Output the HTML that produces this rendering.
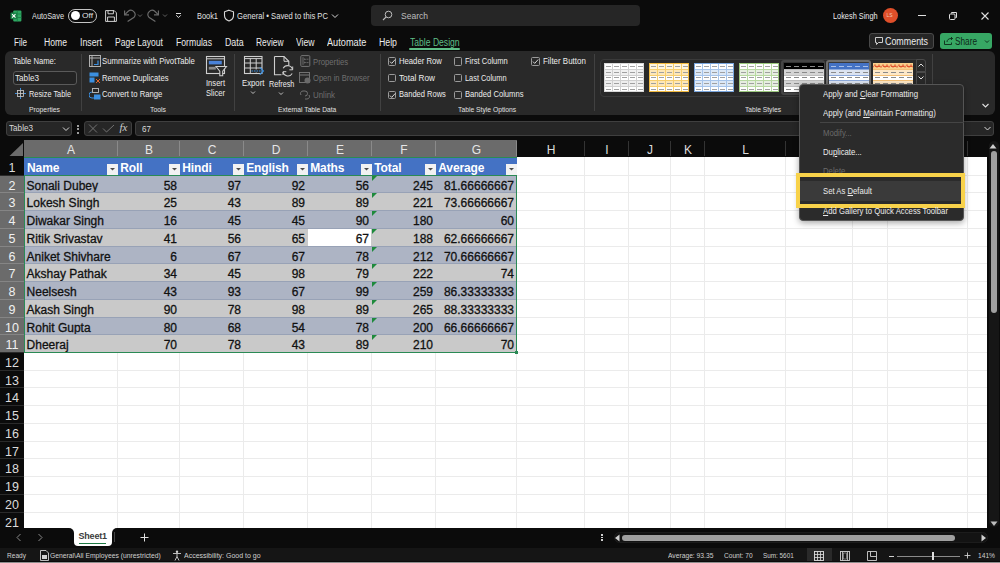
<!DOCTYPE html><html><head><meta charset="utf-8"><style>
*{margin:0;padding:0;box-sizing:border-box}
html,body{width:1000px;height:563px;overflow:hidden;background:#0b0b0b;font-family:"Liberation Sans",sans-serif;}
.a{position:absolute}
.t{position:absolute;white-space:nowrap;line-height:1}
u{text-decoration-thickness:1px;text-underline-offset:0.6px}
</style></head><body><div class="a" style="left:0;top:0;width:1000px;height:563px;background:#0b0b0b"></div>
<svg class="a" style="left:9.5px;top:9.5px" width="12" height="12" viewBox="0 0 12 12"><rect x="3.2" y="0.6" width="8.2" height="10.8" rx="1" fill="#2ea862"/><path d="M3.2 4h8.2M3.2 7.5h8.2M7.3 0.6v10.8" stroke="#1b7c45" stroke-width="0.8"/><rect x="0.5" y="2.6" width="6.6" height="6.6" rx="0.8" fill="#178045"/><path d="M2.1 4.2l3.4 3.4M5.5 4.2l-3.4 3.4" stroke="#ffffff" stroke-width="1.1"/></svg>
<div class="t" style="left:32px;top:11.50px;font-size:9px;color:#e0e0e0;font-weight:400;transform:scaleX(0.8199);transform-origin:0 0;">AutoSave</div>
<div class="a" style="left:68px;top:8.5px;width:29px;height:14px;border:1.5px solid #c4c4c4;border-radius:7px"></div>
<div class="a" style="left:70.8px;top:10.8px;width:9.4px;height:9.4px;background:#fff;border-radius:50%"></div>
<div class="t" style="left:82px;top:11.80px;font-size:8px;color:#e0e0e0;font-weight:400;transform:scaleX(1.0445);transform-origin:0 0;">Off</div>
<svg class="a" style="left:104.5px;top:9.5px" width="12" height="12" viewBox="0 0 12 12"><path d="M0.6 0.6h8.6l2.2 2.2v8.6H0.6z" fill="none" stroke="#d0d0d0" stroke-width="1"/><path d="M3 0.6v3.2h5.4V0.6M2.6 11.4V7h6.8v4.4" fill="none" stroke="#d0d0d0" stroke-width="1"/></svg>
<svg class="a" style="left:122px;top:8px" width="14" height="15" viewBox="0 0 14 15"><path d="M2.8 6.6l3.4-3.3a4.2 4.2 0 0 1 5.9 5.9L5.6 13.6" fill="none" stroke="#6c6c6c" stroke-width="1.15"/><path d="M2.6 2.4v4.4H7" fill="none" stroke="#6c6c6c" stroke-width="1.15"/></svg>
<svg class="a" style="left:136.5px;top:12.5px" width="6" height="5" viewBox="0 0 6 5"><path d="M1 1.5l2 2 2-2" fill="none" stroke="#6c6c6c" stroke-width="0.9"/></svg>
<svg class="a" style="left:147px;top:8px" width="14" height="15" viewBox="0 0 14 15" ><g transform="translate(14,0) scale(-1,1)"><path d="M2.8 6.6l3.4-3.3a4.2 4.2 0 0 1 5.9 5.9L5.6 13.6" fill="none" stroke="#6c6c6c" stroke-width="1.15"/><path d="M2.6 2.4v4.4H7" fill="none" stroke="#6c6c6c" stroke-width="1.15"/></g></svg>
<svg class="a" style="left:161.5px;top:12.5px" width="6" height="5" viewBox="0 0 6 5"><path d="M1 1.5l2 2 2-2" fill="none" stroke="#6c6c6c" stroke-width="0.9"/></svg>
<svg class="a" style="left:175px;top:12px" width="7" height="7" viewBox="0 0 7 7"><path d="M1 1.5h5" stroke="#e0e0e0" stroke-width="1"/><path d="M1.2 3.3l2.3 2.3 2.3-2.3" fill="none" stroke="#e0e0e0" stroke-width="1"/></svg>
<div class="t" style="left:197px;top:11.50px;font-size:9px;color:#e0e0e0;font-weight:400;transform:scaleX(0.8225);transform-origin:0 0;">Book1</div>
<svg class="a" style="left:223px;top:9px" width="12" height="13" viewBox="0 0 12 13"><path d="M6 1.2L10.5 2.8v3.7c0 2.8-2 4.6-4.5 5.5C3.5 11.1 1.5 9.3 1.5 6.5V2.8z" fill="none" stroke="#d8d8d8" stroke-width="1.1"/></svg>
<div class="t" style="left:237px;top:11.50px;font-size:9px;color:#e0e0e0;font-weight:400;transform:scaleX(0.8487);transform-origin:0 0;">General &#8226; Saved to this PC</div>
<svg class="a" style="left:331px;top:13px" width="8" height="6" viewBox="0 0 8 6"><path d="M1 1.5l3 3 3-3" fill="none" stroke="#d8d8d8" stroke-width="1"/></svg>
<div class="a" style="left:371px;top:5px;width:269px;height:21px;background:#262626;border-radius:4px"></div>
<svg class="a" style="left:382px;top:10px" width="11" height="11" viewBox="0 0 11 11"><circle cx="6.5" cy="4.5" r="3.3" fill="none" stroke="#bdbdbd" stroke-width="1"/><path d="M4.2 6.8L1 10" stroke="#bdbdbd" stroke-width="1.1"/></svg>
<div class="t" style="left:401px;top:10.75px;font-size:9.5px;color:#bdbdbd;font-weight:400;transform:scaleX(0.8967);transform-origin:0 0;">Search</div>
<div class="t" style="left:832.5px;top:11.50px;font-size:9px;color:#ececec;font-weight:400;transform:scaleX(0.8176);transform-origin:0 0;">Lokesh Singh</div>
<div class="a" style="left:883px;top:8px;width:15px;height:15px;background:#df4f2a;border-radius:50%"></div>
<div class="t" style="left:886.5px;top:12.5px;font-size:5px;color:#f0c8b8">LS</div>
<div class="a" style="left:918px;top:15px;width:8px;height:1px;background:#e0e0e0"></div>
<svg class="a" style="left:948px;top:11px" width="10" height="10" viewBox="0 0 10 10"><rect x="1.5" y="3" width="5.5" height="5.5" rx="1" fill="none" stroke="#e0e0e0" stroke-width="1"/><path d="M3.5 2.5V1.5h5v5h-1" fill="none" stroke="#e0e0e0" stroke-width="1"/></svg>
<svg class="a" style="left:980px;top:11px" width="10" height="10" viewBox="0 0 10 10"><path d="M1.5 1.5l7 7M8.5 1.5l-7 7" stroke="#e0e0e0" stroke-width="1.1"/></svg>
<div class="t" style="left:14px;top:37.60px;font-size:10px;color:#ececec;font-weight:400;transform:scaleX(0.8062);transform-origin:0 0;">File</div>
<div class="t" style="left:44px;top:37.60px;font-size:10px;color:#ececec;font-weight:400;transform:scaleX(0.8618);transform-origin:0 0;">Home</div>
<div class="t" style="left:80px;top:37.60px;font-size:10px;color:#ececec;font-weight:400;transform:scaleX(0.8795);transform-origin:0 0;">Insert</div>
<div class="t" style="left:115px;top:37.60px;font-size:10px;color:#ececec;font-weight:400;transform:scaleX(0.8545);transform-origin:0 0;">Page Layout</div>
<div class="t" style="left:176.1px;top:37.60px;font-size:10px;color:#ececec;font-weight:400;transform:scaleX(0.8636);transform-origin:0 0;">Formulas</div>
<div class="t" style="left:224.5px;top:37.60px;font-size:10px;color:#ececec;font-weight:400;transform:scaleX(0.8805);transform-origin:0 0;">Data</div>
<div class="t" style="left:255.5px;top:37.60px;font-size:10px;color:#ececec;font-weight:400;transform:scaleX(0.8385);transform-origin:0 0;">Review</div>
<div class="t" style="left:295.8px;top:37.60px;font-size:10px;color:#ececec;font-weight:400;transform:scaleX(0.8651);transform-origin:0 0;">View</div>
<div class="t" style="left:326.8px;top:37.60px;font-size:10px;color:#ececec;font-weight:400;transform:scaleX(0.9180);transform-origin:0 0;">Automate</div>
<div class="t" style="left:378.5px;top:37.60px;font-size:10px;color:#ececec;font-weight:400;transform:scaleX(0.8747);transform-origin:0 0;">Help</div>
<div class="t" style="left:409.5px;top:37.60px;font-size:10px;color:#5fbf87;font-weight:400;transform:scaleX(0.8579);transform-origin:0 0;">Table Design</div>
<div class="a" style="left:409px;top:47.5px;width:51px;height:2px;background:#5fbf87;border-radius:1px"></div>
<div class="a" style="left:869px;top:33px;width:65px;height:16px;background:#262626;border:1px solid #4a4a4a;border-radius:3px"></div>
<svg class="a" style="left:874px;top:36px" width="10" height="10" viewBox="0 0 10 10"><path d="M1.5 1.5h7v5h-4l-2 2v-2h-1z" fill="none" stroke="#e0e0e0" stroke-width="0.9"/></svg>
<div class="t" style="left:885px;top:37.10px;font-size:10px;color:#ececec;font-weight:400;transform:scaleX(0.8892);transform-origin:0 0;">Comments</div>
<div class="a" style="left:939.5px;top:33px;width:52.5px;height:16px;background:#37a764;border-radius:3px"></div>
<svg class="a" style="left:943px;top:36px" width="11" height="10" viewBox="0 0 11 10"><path d="M1.5 4.5v4h7v-2M4 6c0-2 1.5-3.5 4-3.5h1.5M8 1l1.5 1.5L8 4" fill="none" stroke="#0d2a18" stroke-width="0.9"/></svg>
<div class="t" style="left:955px;top:37.10px;font-size:10px;color:#0d2a18;font-weight:400;transform:scaleX(0.8244);transform-origin:0 0;">Share</div>
<svg class="a" style="left:984px;top:39px" width="6" height="5" viewBox="0 0 6 5"><path d="M1 1.5l2 2 2-2" fill="none" stroke="#0d2a18" stroke-width="0.9"/></svg>
<div class="a" style="left:5px;top:51px;width:989.5px;height:63.5px;background:#292929;border-radius:6px"></div>
<div class="t" style="left:13px;top:56.90px;font-size:9px;color:#ececec;font-weight:400;transform:scaleX(0.8510);transform-origin:0 0;">Table Name:</div>
<div class="a" style="left:13px;top:71px;width:63.5px;height:14px;border:1px solid #5a5a5a;border-radius:3px;background:#232323"></div>
<div class="t" style="left:14.5px;top:73.50px;font-size:9px;color:#ececec;font-weight:400;transform:scaleX(0.9046);transform-origin:0 0;">Table3</div>
<svg class="a" style="left:15px;top:88px" width="11" height="11" viewBox="0 0 11 11"><rect x="2.5" y="2.5" width="6" height="6" fill="none" stroke="#cfcfcf" stroke-width="0.8"/><path d="M2.5 5.5h6M5.5 2.5v6" stroke="#cfcfcf" stroke-width="0.8"/><path d="M5.5 0v2M5.5 9v2M0 5.5h2M9 5.5h2" stroke="#3b8fe0" stroke-width="1"/></svg>
<div class="t" style="left:29px;top:90.10px;font-size:9px;color:#ececec;font-weight:400;transform:scaleX(0.8175);transform-origin:0 0;">Resize Table</div>
<div class="t" style="left:29px;top:105.90px;font-size:8px;color:#e0e0e0;font-weight:400;transform:scaleX(0.8500);transform-origin:0 0;">Properties</div>
<div class="a" style="left:81px;top:54px;width:1px;height:57px;background:#414141"></div>
<svg class="a" style="left:89px;top:55px" width="12" height="12" viewBox="0 0 12 12"><rect x="0.5" y="0.5" width="11" height="11" fill="none" stroke="#bfbfbf" stroke-width="0.9"/><path d="M0.5 3h11M3 0.5v11" stroke="#bfbfbf" stroke-width="0.9"/><path d="M5 9.5h4v-4" fill="none" stroke="#3b8fe0" stroke-width="1.2"/></svg>
<div class="t" style="left:102.4px;top:57.10px;font-size:9px;color:#ececec;font-weight:400;transform:scaleX(0.8589);transform-origin:0 0;">Summarize with PivotTable</div>
<svg class="a" style="left:89px;top:72px" width="12" height="12" viewBox="0 0 12 12"><rect x="0.5" y="0.5" width="9" height="4" fill="#3b8fe0"/><rect x="0.5" y="5.5" width="5" height="5" fill="#3b8fe0"/><path d="M7 7l4 4M11 7l-4 4" stroke="#e0662c" stroke-width="1"/></svg>
<div class="t" style="left:102.4px;top:73.50px;font-size:9px;color:#ececec;font-weight:400;transform:scaleX(0.8533);transform-origin:0 0;">Remove Duplicates</div>
<svg class="a" style="left:89px;top:88px" width="12" height="13" viewBox="0 0 12 13"><rect x="3.5" y="0.5" width="6" height="4" fill="none" stroke="#bfbfbf" stroke-width="0.9"/><rect x="5" y="6.5" width="6.5" height="5" fill="#3b8fe0"/><path d="M3 4a3 3 0 0 0 0 6h2" fill="none" stroke="#3b8fe0" stroke-width="1"/></svg>
<div class="t" style="left:102.4px;top:90.40px;font-size:9px;color:#ececec;font-weight:400;transform:scaleX(0.8562);transform-origin:0 0;">Convert to Range</div>
<svg class="a" style="left:205px;top:55px" width="23" height="22" viewBox="0 0 23 22"><rect x="1.5" y="1.5" width="18" height="17" fill="none" stroke="#cfcfcf" stroke-width="1.1"/><path d="M1.5 3.8h18" stroke="#cfcfcf" stroke-width="1"/><rect x="3.8" y="5.8" width="13" height="3.6" fill="#4a82d8"/><rect x="3.8" y="11.8" width="7" height="2.8" fill="#8a8a8a"/><path d="M11 11.5h10.5l-3.8 4.6v4.6h-2.9v-4.6z" fill="#292929" stroke="#cfcfcf" stroke-width="1.05"/></svg>
<div class="t" style="left:206px;top:78.50px;font-size:9px;color:#ececec;font-weight:400;transform:scaleX(0.8439);transform-origin:0 0;">Insert</div>
<div class="t" style="left:206px;top:88.90px;font-size:9px;color:#ececec;font-weight:400;transform:scaleX(0.8439);transform-origin:0 0;">Slicer</div>
<div class="t" style="left:149.6px;top:106.00px;font-size:8px;color:#e0e0e0;font-weight:400;transform:scaleX(0.8562);transform-origin:0 0;">Tools</div>
<div class="a" style="left:234px;top:54px;width:1px;height:57px;background:#414141"></div>
<svg class="a" style="left:243px;top:55px" width="22" height="21" viewBox="0 0 22 21"><rect x="1.5" y="1.5" width="17.5" height="17" fill="none" stroke="#cfcfcf" stroke-width="1.1"/><path d="M1.5 3.6h17.5M1.5 8h17.5M1.5 13h17.5M7.3 3.6v15M13.2 3.6v15" stroke="#cfcfcf" stroke-width="1"/><rect x="8.5" y="14.5" width="10" height="3" fill="#292929"/><path d="M8.5 16h11.5" stroke="#3b8fe0" stroke-width="1.1" stroke-dasharray="1.6 0.9"/><path d="M16.8 12.3l3.6 3.7-3.6 3.7" fill="none" stroke="#3b8fe0" stroke-width="1.2"/></svg>
<div class="t" style="left:241.8px;top:78.50px;font-size:9px;color:#ececec;font-weight:400;transform:scaleX(0.8610);transform-origin:0 0;">Export</div>
<svg class="a" style="left:250px;top:90px" width="6" height="5" viewBox="0 0 6 5"><path d="M1 1.5l2 2 2-2" fill="none" stroke="#cfcfcf" stroke-width="0.9"/></svg>
<svg class="a" style="left:273px;top:55px" width="21" height="22" viewBox="0 0 21 22"><path d="M1.5 1.5h9.5l4.8 4.8V11M8.5 19.8h-7V1.5" fill="none" stroke="#cfcfcf" stroke-width="1.1"/><path d="M11 1.5v4.8h4.8" fill="none" stroke="#cfcfcf" stroke-width="1"/><path d="M19.5 14.5a5 5 0 0 0-9.3-1.2M10 17a5 5 0 0 0 9.2 1.6" fill="none" stroke="#cfcfcf" stroke-width="1.05"/><path d="M19.7 11.5v3.3h-3.3M10 20v-3.3h3.3" fill="none" stroke="#cfcfcf" stroke-width="1"/></svg>
<div class="t" style="left:268.5px;top:79.50px;font-size:9px;color:#ececec;font-weight:400;transform:scaleX(0.8059);transform-origin:0 0;">Refresh</div>
<svg class="a" style="left:278px;top:91px" width="6" height="5" viewBox="0 0 6 5"><path d="M1 1.5l2 2 2-2" fill="none" stroke="#cfcfcf" stroke-width="0.9"/></svg>
<svg class="a" style="left:299.5px;top:55px" width="11" height="12" viewBox="0 0 11 12"><rect x="0.8" y="0.6" width="9" height="10.8" rx="1" fill="none" stroke="#757575" stroke-width="1"/><path d="M3 2.2v7.6" stroke="#757575" stroke-width="0.9"/><path d="M4.2 3.2l2 1-2 1zM4.2 6.6l2 1-2 1z" fill="#757575"/><path d="M6.5 4.2h2M6.5 7.6h2" stroke="#757575" stroke-width="0.8"/></svg>
<div class="t" style="left:312.8px;top:57.70px;font-size:9px;color:#6f6f6f;font-weight:400;transform:scaleX(0.8579);transform-origin:0 0;">Properties</div>
<svg class="a" style="left:299px;top:72px" width="12" height="12" viewBox="0 0 12 12"><rect x="0.5" y="0.5" width="10" height="10" fill="none" stroke="#7a7a7a" stroke-width="0.9"/><path d="M0.5 3h10" stroke="#7a7a7a"/><circle cx="8.5" cy="8.5" r="3" fill="#6a6a6a"/></svg>
<div class="t" style="left:312.8px;top:74.10px;font-size:9px;color:#6f6f6f;font-weight:400;transform:scaleX(0.8429);transform-origin:0 0;">Open in Browser</div>
<svg class="a" style="left:299px;top:88px" width="12" height="13" viewBox="0 0 12 13"><path d="M2 7a2.5 2.5 0 0 1 2-4h2a2.5 2.5 0 0 1 0 5M10 7a2.5 2.5 0 0 1-2 4H6" fill="none" stroke="#7a7a7a" stroke-width="0.9"/></svg>
<div class="t" style="left:312.8px;top:90.70px;font-size:9px;color:#6f6f6f;font-weight:400;transform:scaleX(0.8795);transform-origin:0 0;">Unlink</div>
<div class="t" style="left:277.7px;top:106.00px;font-size:8px;color:#e0e0e0;font-weight:400;transform:scaleX(0.8368);transform-origin:0 0;">External Table Data</div>
<div class="a" style="left:380px;top:54px;width:1px;height:57px;background:#414141"></div>
<div class="a" style="left:387.5px;top:57.3px;width:8.5px;height:8.5px;border:1px solid #9a9a9a;border-radius:1.5px"></div>
<svg class="a" style="left:387.5px;top:57.3px" width="9" height="9" viewBox="0 0 9 9"><path d="M2 4.6l1.7 1.8 3.5-3.9" fill="none" stroke="#e8e8e8" stroke-width="0.9"/></svg>
<div class="t" style="left:399.0px;top:57.00px;font-size:9px;color:#ececec;font-weight:400;transform:scaleX(0.8555);transform-origin:0 0;">Header Row</div>
<div class="a" style="left:387.5px;top:73.8px;width:8.5px;height:8.5px;border:1px solid #9a9a9a;border-radius:1.5px"></div>
<div class="t" style="left:399.0px;top:73.50px;font-size:9px;color:#ececec;font-weight:400;transform:scaleX(0.9110);transform-origin:0 0;">Total Row</div>
<div class="a" style="left:387.5px;top:90.6px;width:8.5px;height:8.5px;border:1px solid #9a9a9a;border-radius:1.5px"></div>
<svg class="a" style="left:387.5px;top:90.6px" width="9" height="9" viewBox="0 0 9 9"><path d="M2 4.6l1.7 1.8 3.5-3.9" fill="none" stroke="#e8e8e8" stroke-width="0.9"/></svg>
<div class="t" style="left:399.0px;top:90.30px;font-size:9px;color:#ececec;font-weight:400;transform:scaleX(0.8368);transform-origin:0 0;">Banded Rows</div>
<div class="a" style="left:453.8px;top:57.3px;width:8.5px;height:8.5px;border:1px solid #9a9a9a;border-radius:1.5px"></div>
<div class="t" style="left:465.3px;top:57.00px;font-size:9px;color:#ececec;font-weight:400;transform:scaleX(0.8390);transform-origin:0 0;">First Column</div>
<div class="a" style="left:453.8px;top:73.8px;width:8.5px;height:8.5px;border:1px solid #9a9a9a;border-radius:1.5px"></div>
<div class="t" style="left:465.3px;top:73.50px;font-size:9px;color:#ececec;font-weight:400;transform:scaleX(0.8213);transform-origin:0 0;">Last Column</div>
<div class="a" style="left:453.8px;top:90.6px;width:8.5px;height:8.5px;border:1px solid #9a9a9a;border-radius:1.5px"></div>
<div class="t" style="left:465.3px;top:90.30px;font-size:9px;color:#ececec;font-weight:400;transform:scaleX(0.8473);transform-origin:0 0;">Banded Columns</div>
<div class="a" style="left:531.4px;top:57.3px;width:8.5px;height:8.5px;border:1px solid #9a9a9a;border-radius:1.5px"></div>
<svg class="a" style="left:531.4px;top:57.3px" width="9" height="9" viewBox="0 0 9 9"><path d="M2 4.6l1.7 1.8 3.5-3.9" fill="none" stroke="#e8e8e8" stroke-width="0.9"/></svg>
<div class="t" style="left:542.9px;top:57.00px;font-size:9px;color:#ececec;font-weight:400;transform:scaleX(0.8819);transform-origin:0 0;">Filter Button</div>
<div class="t" style="left:457.8px;top:105.60px;font-size:8px;color:#e0e0e0;font-weight:400;transform:scaleX(0.8442);transform-origin:0 0;">Table Style Options</div>
<div class="a" style="left:594px;top:54px;width:1px;height:57px;background:#414141"></div>
<div class="a" style="left:600px;top:58.5px;width:326px;height:38.5px;border:1px solid #3a3a3a;border-radius:4px"></div>
<svg class="a" style="left:604px;top:63px" width="40" height="29" viewBox="0 0 40 29" shape-rendering="crispEdges"><rect x="0" y="0" width="40" height="6" fill="#ffffff"/><rect x="0" y="6" width="40" height="6" fill="#f0f0f0"/><rect x="0" y="12" width="40" height="5" fill="#ffffff"/><rect x="0" y="17" width="40" height="6" fill="#eeeeee"/><rect x="0" y="23" width="40" height="6" fill="#ffffff"/><rect x="0" y="6" width="40" height="1" fill="#d0d0d0"/><rect x="0" y="12" width="40" height="1" fill="#d0d0d0"/><rect x="0" y="17" width="40" height="1" fill="#d0d0d0"/><rect x="0" y="23" width="40" height="1" fill="#d0d0d0"/><rect x="8" y="0" width="1" height="29" fill="#d0d0d0"/><rect x="16" y="0" width="1" height="29" fill="#d0d0d0"/><rect x="24" y="0" width="1" height="29" fill="#d0d0d0"/><rect x="32" y="0" width="1" height="29" fill="#d0d0d0"/><rect x="2" y="3" width="4.5" height="1" fill="#a0a0a0"/><rect x="10" y="3" width="4.5" height="1" fill="#a0a0a0"/><rect x="18" y="3" width="4.5" height="1" fill="#a0a0a0"/><rect x="26" y="3" width="4.5" height="1" fill="#a0a0a0"/><rect x="34" y="3" width="4.5" height="1" fill="#a0a0a0"/><rect x="2" y="9" width="4.5" height="1" fill="#a0a0a0"/><rect x="10" y="9" width="4.5" height="1" fill="#a0a0a0"/><rect x="18" y="9" width="4.5" height="1" fill="#a0a0a0"/><rect x="26" y="9" width="4.5" height="1" fill="#a0a0a0"/><rect x="34" y="9" width="4.5" height="1" fill="#a0a0a0"/><rect x="2" y="14" width="4.5" height="1" fill="#a0a0a0"/><rect x="10" y="14" width="4.5" height="1" fill="#a0a0a0"/><rect x="18" y="14" width="4.5" height="1" fill="#a0a0a0"/><rect x="26" y="14" width="4.5" height="1" fill="#a0a0a0"/><rect x="34" y="14" width="4.5" height="1" fill="#a0a0a0"/><rect x="2" y="20" width="4.5" height="1" fill="#a0a0a0"/><rect x="10" y="20" width="4.5" height="1" fill="#a0a0a0"/><rect x="18" y="20" width="4.5" height="1" fill="#a0a0a0"/><rect x="26" y="20" width="4.5" height="1" fill="#a0a0a0"/><rect x="34" y="20" width="4.5" height="1" fill="#a0a0a0"/><rect x="2" y="26" width="4.5" height="1" fill="#a0a0a0"/><rect x="10" y="26" width="4.5" height="1" fill="#a0a0a0"/><rect x="18" y="26" width="4.5" height="1" fill="#a0a0a0"/><rect x="26" y="26" width="4.5" height="1" fill="#a0a0a0"/><rect x="34" y="26" width="4.5" height="1" fill="#a0a0a0"/><rect x="0.5" y="0.5" width="39" height="28" fill="none" stroke="#d8d8d8" stroke-width="1"/></svg>
<svg class="a" style="left:649px;top:63px" width="40" height="29" viewBox="0 0 40 29" shape-rendering="crispEdges"><rect x="0" y="0" width="40" height="6" fill="#fff6e0"/><rect x="0" y="6" width="40" height="6" fill="#fde7b8"/><rect x="0" y="12" width="40" height="5" fill="#ffffff"/><rect x="0" y="17" width="40" height="6" fill="#fde7b8"/><rect x="0" y="23" width="40" height="6" fill="#ffffff"/><rect x="0" y="6" width="40" height="1" fill="#f7cf6e"/><rect x="0" y="12" width="40" height="1" fill="#f7cf6e"/><rect x="0" y="17" width="40" height="1" fill="#f7cf6e"/><rect x="0" y="23" width="40" height="1" fill="#f7cf6e"/><rect x="8" y="0" width="1" height="29" fill="#f7cf6e"/><rect x="16" y="0" width="1" height="29" fill="#f7cf6e"/><rect x="24" y="0" width="1" height="29" fill="#f7cf6e"/><rect x="32" y="0" width="1" height="29" fill="#f7cf6e"/><rect x="2" y="3" width="4.5" height="1" fill="#a0a0a0"/><rect x="10" y="3" width="4.5" height="1" fill="#a0a0a0"/><rect x="18" y="3" width="4.5" height="1" fill="#a0a0a0"/><rect x="26" y="3" width="4.5" height="1" fill="#a0a0a0"/><rect x="34" y="3" width="4.5" height="1" fill="#a0a0a0"/><rect x="2" y="9" width="4.5" height="1" fill="#a0a0a0"/><rect x="10" y="9" width="4.5" height="1" fill="#a0a0a0"/><rect x="18" y="9" width="4.5" height="1" fill="#a0a0a0"/><rect x="26" y="9" width="4.5" height="1" fill="#a0a0a0"/><rect x="34" y="9" width="4.5" height="1" fill="#a0a0a0"/><rect x="2" y="14" width="4.5" height="1" fill="#a0a0a0"/><rect x="10" y="14" width="4.5" height="1" fill="#a0a0a0"/><rect x="18" y="14" width="4.5" height="1" fill="#a0a0a0"/><rect x="26" y="14" width="4.5" height="1" fill="#a0a0a0"/><rect x="34" y="14" width="4.5" height="1" fill="#a0a0a0"/><rect x="2" y="20" width="4.5" height="1" fill="#a0a0a0"/><rect x="10" y="20" width="4.5" height="1" fill="#a0a0a0"/><rect x="18" y="20" width="4.5" height="1" fill="#a0a0a0"/><rect x="26" y="20" width="4.5" height="1" fill="#a0a0a0"/><rect x="34" y="20" width="4.5" height="1" fill="#a0a0a0"/><rect x="2" y="26" width="4.5" height="1" fill="#a0a0a0"/><rect x="10" y="26" width="4.5" height="1" fill="#a0a0a0"/><rect x="18" y="26" width="4.5" height="1" fill="#a0a0a0"/><rect x="26" y="26" width="4.5" height="1" fill="#a0a0a0"/><rect x="34" y="26" width="4.5" height="1" fill="#a0a0a0"/><rect x="0.5" y="0.5" width="39" height="28" fill="none" stroke="#f2bb42" stroke-width="1"/></svg>
<svg class="a" style="left:694px;top:63px" width="40" height="29" viewBox="0 0 40 29" shape-rendering="crispEdges"><rect x="0" y="0" width="40" height="6" fill="#ffffff"/><rect x="0" y="6" width="40" height="6" fill="#dce8f6"/><rect x="0" y="12" width="40" height="5" fill="#ffffff"/><rect x="0" y="17" width="40" height="6" fill="#dce8f6"/><rect x="0" y="23" width="40" height="6" fill="#ffffff"/><rect x="0" y="6" width="40" height="1" fill="#a6c4ea"/><rect x="0" y="12" width="40" height="1" fill="#a6c4ea"/><rect x="0" y="17" width="40" height="1" fill="#a6c4ea"/><rect x="0" y="23" width="40" height="1" fill="#a6c4ea"/><rect x="8" y="0" width="1" height="29" fill="#a6c4ea"/><rect x="16" y="0" width="1" height="29" fill="#a6c4ea"/><rect x="24" y="0" width="1" height="29" fill="#a6c4ea"/><rect x="32" y="0" width="1" height="29" fill="#a6c4ea"/><rect x="2" y="3" width="4.5" height="1" fill="#a0a0a0"/><rect x="10" y="3" width="4.5" height="1" fill="#a0a0a0"/><rect x="18" y="3" width="4.5" height="1" fill="#a0a0a0"/><rect x="26" y="3" width="4.5" height="1" fill="#a0a0a0"/><rect x="34" y="3" width="4.5" height="1" fill="#a0a0a0"/><rect x="2" y="9" width="4.5" height="1" fill="#a0a0a0"/><rect x="10" y="9" width="4.5" height="1" fill="#a0a0a0"/><rect x="18" y="9" width="4.5" height="1" fill="#a0a0a0"/><rect x="26" y="9" width="4.5" height="1" fill="#a0a0a0"/><rect x="34" y="9" width="4.5" height="1" fill="#a0a0a0"/><rect x="2" y="14" width="4.5" height="1" fill="#a0a0a0"/><rect x="10" y="14" width="4.5" height="1" fill="#a0a0a0"/><rect x="18" y="14" width="4.5" height="1" fill="#a0a0a0"/><rect x="26" y="14" width="4.5" height="1" fill="#a0a0a0"/><rect x="34" y="14" width="4.5" height="1" fill="#a0a0a0"/><rect x="2" y="20" width="4.5" height="1" fill="#a0a0a0"/><rect x="10" y="20" width="4.5" height="1" fill="#a0a0a0"/><rect x="18" y="20" width="4.5" height="1" fill="#a0a0a0"/><rect x="26" y="20" width="4.5" height="1" fill="#a0a0a0"/><rect x="34" y="20" width="4.5" height="1" fill="#a0a0a0"/><rect x="2" y="26" width="4.5" height="1" fill="#a0a0a0"/><rect x="10" y="26" width="4.5" height="1" fill="#a0a0a0"/><rect x="18" y="26" width="4.5" height="1" fill="#a0a0a0"/><rect x="26" y="26" width="4.5" height="1" fill="#a0a0a0"/><rect x="34" y="26" width="4.5" height="1" fill="#a0a0a0"/><rect x="0.5" y="0.5" width="39" height="28" fill="none" stroke="#7aa6dd" stroke-width="1"/></svg>
<svg class="a" style="left:739px;top:63px" width="40" height="29" viewBox="0 0 40 29" shape-rendering="crispEdges"><rect x="0" y="0" width="40" height="6" fill="#ffffff"/><rect x="0" y="6" width="40" height="6" fill="#e6eee0"/><rect x="0" y="12" width="40" height="5" fill="#ffffff"/><rect x="0" y="17" width="40" height="6" fill="#e6eee0"/><rect x="0" y="23" width="40" height="6" fill="#ffffff"/><rect x="0" y="6" width="40" height="1" fill="#b8d9a2"/><rect x="0" y="12" width="40" height="1" fill="#b8d9a2"/><rect x="0" y="17" width="40" height="1" fill="#b8d9a2"/><rect x="0" y="23" width="40" height="1" fill="#b8d9a2"/><rect x="8" y="0" width="1" height="29" fill="#b8d9a2"/><rect x="16" y="0" width="1" height="29" fill="#b8d9a2"/><rect x="24" y="0" width="1" height="29" fill="#b8d9a2"/><rect x="32" y="0" width="1" height="29" fill="#b8d9a2"/><rect x="2" y="3" width="4.5" height="1" fill="#a0a0a0"/><rect x="10" y="3" width="4.5" height="1" fill="#a0a0a0"/><rect x="18" y="3" width="4.5" height="1" fill="#a0a0a0"/><rect x="26" y="3" width="4.5" height="1" fill="#a0a0a0"/><rect x="34" y="3" width="4.5" height="1" fill="#a0a0a0"/><rect x="2" y="9" width="4.5" height="1" fill="#a0a0a0"/><rect x="10" y="9" width="4.5" height="1" fill="#a0a0a0"/><rect x="18" y="9" width="4.5" height="1" fill="#a0a0a0"/><rect x="26" y="9" width="4.5" height="1" fill="#a0a0a0"/><rect x="34" y="9" width="4.5" height="1" fill="#a0a0a0"/><rect x="2" y="14" width="4.5" height="1" fill="#a0a0a0"/><rect x="10" y="14" width="4.5" height="1" fill="#a0a0a0"/><rect x="18" y="14" width="4.5" height="1" fill="#a0a0a0"/><rect x="26" y="14" width="4.5" height="1" fill="#a0a0a0"/><rect x="34" y="14" width="4.5" height="1" fill="#a0a0a0"/><rect x="2" y="20" width="4.5" height="1" fill="#a0a0a0"/><rect x="10" y="20" width="4.5" height="1" fill="#a0a0a0"/><rect x="18" y="20" width="4.5" height="1" fill="#a0a0a0"/><rect x="26" y="20" width="4.5" height="1" fill="#a0a0a0"/><rect x="34" y="20" width="4.5" height="1" fill="#a0a0a0"/><rect x="2" y="26" width="4.5" height="1" fill="#a0a0a0"/><rect x="10" y="26" width="4.5" height="1" fill="#a0a0a0"/><rect x="18" y="26" width="4.5" height="1" fill="#a0a0a0"/><rect x="26" y="26" width="4.5" height="1" fill="#a0a0a0"/><rect x="34" y="26" width="4.5" height="1" fill="#a0a0a0"/><rect x="0.5" y="0.5" width="39" height="28" fill="none" stroke="#9cc87f" stroke-width="1"/></svg>
<div class="a" style="left:780.5px;top:60px;width:44px;height:35px;border:2.5px solid #454545;border-radius:3px;background:#333"></div>
<svg class="a" style="left:784px;top:63px" width="40" height="29" viewBox="0 0 40 29" shape-rendering="crispEdges"><rect x="0" y="0" width="40" height="6" fill="#000000"/><rect x="0" y="6" width="40" height="6" fill="#d4d4d4"/><rect x="0" y="12" width="40" height="5" fill="#ffffff"/><rect x="0" y="17" width="40" height="6" fill="#d4d4d4"/><rect x="0" y="23" width="40" height="6" fill="#ffffff"/><rect x="0" y="6" width="40" height="1" fill="#bdbdbd"/><rect x="0" y="12" width="40" height="1" fill="#bdbdbd"/><rect x="0" y="17" width="40" height="1" fill="#bdbdbd"/><rect x="0" y="23" width="40" height="1" fill="#bdbdbd"/><rect x="2" y="3" width="4.5" height="1" fill="#8a8a8a"/><rect x="10" y="3" width="4.5" height="1" fill="#8a8a8a"/><rect x="18" y="3" width="4.5" height="1" fill="#8a8a8a"/><rect x="26" y="3" width="4.5" height="1" fill="#8a8a8a"/><rect x="34" y="3" width="4.5" height="1" fill="#8a8a8a"/><rect x="2" y="9" width="4.5" height="1" fill="#8a8a8a"/><rect x="10" y="9" width="4.5" height="1" fill="#8a8a8a"/><rect x="18" y="9" width="4.5" height="1" fill="#8a8a8a"/><rect x="26" y="9" width="4.5" height="1" fill="#8a8a8a"/><rect x="34" y="9" width="4.5" height="1" fill="#8a8a8a"/><rect x="2" y="14" width="4.5" height="1" fill="#8a8a8a"/><rect x="10" y="14" width="4.5" height="1" fill="#8a8a8a"/><rect x="18" y="14" width="4.5" height="1" fill="#8a8a8a"/><rect x="26" y="14" width="4.5" height="1" fill="#8a8a8a"/><rect x="34" y="14" width="4.5" height="1" fill="#8a8a8a"/><rect x="2" y="20" width="4.5" height="1" fill="#8a8a8a"/><rect x="10" y="20" width="4.5" height="1" fill="#8a8a8a"/><rect x="18" y="20" width="4.5" height="1" fill="#8a8a8a"/><rect x="26" y="20" width="4.5" height="1" fill="#8a8a8a"/><rect x="34" y="20" width="4.5" height="1" fill="#8a8a8a"/><rect x="2" y="26" width="4.5" height="1" fill="#8a8a8a"/><rect x="10" y="26" width="4.5" height="1" fill="#8a8a8a"/><rect x="18" y="26" width="4.5" height="1" fill="#8a8a8a"/><rect x="26" y="26" width="4.5" height="1" fill="#8a8a8a"/><rect x="34" y="26" width="4.5" height="1" fill="#8a8a8a"/></svg>
<div class="a" style="left:825.5px;top:60px;width:45px;height:35px;border:2.5px solid #6e6e6e;border-radius:3px;background:#3a3a3a"></div>
<svg class="a" style="left:829px;top:63px" width="40" height="29" viewBox="0 0 40 29" shape-rendering="crispEdges"><rect x="0" y="0" width="40" height="6" fill="#4472c4"/><rect x="0" y="6" width="40" height="6" fill="#dce3f0"/><rect x="0" y="12" width="40" height="5" fill="#ffffff"/><rect x="0" y="17" width="40" height="6" fill="#dce3f0"/><rect x="0" y="23" width="40" height="6" fill="#ffffff"/><rect x="0" y="6" width="40" height="1" fill="#8eaadb"/><rect x="0" y="12" width="40" height="1" fill="#8eaadb"/><rect x="0" y="17" width="40" height="1" fill="#8eaadb"/><rect x="0" y="23" width="40" height="1" fill="#8eaadb"/><rect x="2" y="3" width="4.5" height="1" fill="#a9c0e8"/><rect x="10" y="3" width="4.5" height="1" fill="#a9c0e8"/><rect x="18" y="3" width="4.5" height="1" fill="#a9c0e8"/><rect x="26" y="3" width="4.5" height="1" fill="#a9c0e8"/><rect x="34" y="3" width="4.5" height="1" fill="#a9c0e8"/><rect x="2" y="9" width="4.5" height="1" fill="#8a8a8a"/><rect x="10" y="9" width="4.5" height="1" fill="#8a8a8a"/><rect x="18" y="9" width="4.5" height="1" fill="#8a8a8a"/><rect x="26" y="9" width="4.5" height="1" fill="#8a8a8a"/><rect x="34" y="9" width="4.5" height="1" fill="#8a8a8a"/><rect x="2" y="14" width="4.5" height="1" fill="#8a8a8a"/><rect x="10" y="14" width="4.5" height="1" fill="#8a8a8a"/><rect x="18" y="14" width="4.5" height="1" fill="#8a8a8a"/><rect x="26" y="14" width="4.5" height="1" fill="#8a8a8a"/><rect x="34" y="14" width="4.5" height="1" fill="#8a8a8a"/><rect x="2" y="20" width="4.5" height="1" fill="#8a8a8a"/><rect x="10" y="20" width="4.5" height="1" fill="#8a8a8a"/><rect x="18" y="20" width="4.5" height="1" fill="#8a8a8a"/><rect x="26" y="20" width="4.5" height="1" fill="#8a8a8a"/><rect x="34" y="20" width="4.5" height="1" fill="#8a8a8a"/><rect x="2" y="26" width="4.5" height="1" fill="#8a8a8a"/><rect x="10" y="26" width="4.5" height="1" fill="#8a8a8a"/><rect x="18" y="26" width="4.5" height="1" fill="#8a8a8a"/><rect x="26" y="26" width="4.5" height="1" fill="#8a8a8a"/><rect x="34" y="26" width="4.5" height="1" fill="#8a8a8a"/></svg>
<svg class="a" style="left:873px;top:63px" width="40" height="29" viewBox="0 0 40 29" shape-rendering="crispEdges"><rect x="0" y="0" width="40" height="6" fill="#f8d08c"/><rect x="0" y="6" width="40" height="6" fill="#fde8c8"/><rect x="0" y="12" width="40" height="5" fill="#ffffff"/><rect x="0" y="17" width="40" height="6" fill="#fde8c8"/><rect x="0" y="23" width="40" height="6" fill="#ffffff"/><path d="M0 4.5 l2 -3 l2 3 l2 -3 l2 3 l2 -3 l2 3 l2 -3 l2 3 l2 -3 l2 3 l2 -3 l2 3 l2 -3 l2 3 l2 -3 l2 3 l2 -3 l2 3 l2 -3 l2 3" fill="none" stroke="#e2603a" stroke-width="0.9" shape-rendering="auto"/><rect x="0" y="6" width="40" height="1" fill="#f3c077"/><rect x="0" y="12" width="40" height="1" fill="#f3c077"/><rect x="0" y="17" width="40" height="1" fill="#f3c077"/><rect x="0" y="23" width="40" height="1" fill="#f3c077"/><rect x="2" y="3" width="4.5" height="1" fill="#e0542e"/><rect x="10" y="3" width="4.5" height="1" fill="#e0542e"/><rect x="18" y="3" width="4.5" height="1" fill="#e0542e"/><rect x="26" y="3" width="4.5" height="1" fill="#e0542e"/><rect x="34" y="3" width="4.5" height="1" fill="#e0542e"/><rect x="2" y="9" width="4.5" height="1" fill="#8a8a8a"/><rect x="10" y="9" width="4.5" height="1" fill="#8a8a8a"/><rect x="18" y="9" width="4.5" height="1" fill="#8a8a8a"/><rect x="26" y="9" width="4.5" height="1" fill="#8a8a8a"/><rect x="34" y="9" width="4.5" height="1" fill="#8a8a8a"/><rect x="2" y="14" width="4.5" height="1" fill="#8a8a8a"/><rect x="10" y="14" width="4.5" height="1" fill="#8a8a8a"/><rect x="18" y="14" width="4.5" height="1" fill="#8a8a8a"/><rect x="26" y="14" width="4.5" height="1" fill="#8a8a8a"/><rect x="34" y="14" width="4.5" height="1" fill="#8a8a8a"/><rect x="2" y="20" width="4.5" height="1" fill="#8a8a8a"/><rect x="10" y="20" width="4.5" height="1" fill="#8a8a8a"/><rect x="18" y="20" width="4.5" height="1" fill="#8a8a8a"/><rect x="26" y="20" width="4.5" height="1" fill="#8a8a8a"/><rect x="34" y="20" width="4.5" height="1" fill="#8a8a8a"/><rect x="2" y="26" width="4.5" height="1" fill="#8a8a8a"/><rect x="10" y="26" width="4.5" height="1" fill="#8a8a8a"/><rect x="18" y="26" width="4.5" height="1" fill="#8a8a8a"/><rect x="26" y="26" width="4.5" height="1" fill="#8a8a8a"/><rect x="34" y="26" width="4.5" height="1" fill="#8a8a8a"/></svg>
<div class="a" style="left:916px;top:58.5px;width:10px;height:13px;border:1px solid #4a4a4a;border-radius:0 3px 0 0;background:#292929"></div>
<svg class="a" style="left:917px;top:62px" width="8" height="6" viewBox="0 0 8 6"><path d="M1.5 4.5l2.5-2.5 2.5 2.5" fill="none" stroke="#e0e0e0" stroke-width="1"/></svg>
<div class="a" style="left:916px;top:72px;width:10px;height:12.5px;border:1px solid #4a4a4a;background:#292929"></div>
<svg class="a" style="left:917px;top:75px" width="8" height="6" viewBox="0 0 8 6"><path d="M1.5 1.5l2.5 2.5 2.5-2.5" fill="none" stroke="#e0e0e0" stroke-width="1"/></svg>
<div class="a" style="left:932px;top:54px;width:1px;height:57px;background:#414141"></div>
<div class="t" style="left:745px;top:106.00px;font-size:8px;color:#e0e0e0;font-weight:400;transform:scaleX(0.8345);transform-origin:0 0;">Table Styles</div>
<svg class="a" style="left:981px;top:102px" width="9" height="7" viewBox="0 0 9 7"><path d="M1.5 2l3 3 3-3" fill="none" stroke="#e0e0e0" stroke-width="1.1"/></svg>
<div class="a" style="left:5.5px;top:120.5px;width:66px;height:15.5px;background:#262626;border:1px solid #3f3f3f;border-radius:3px"></div>
<div class="t" style="left:9px;top:123.70px;font-size:9px;color:#d8d8d8;font-weight:400;transform:scaleX(0.9046);transform-origin:0 0;">Table3</div>
<svg class="a" style="left:62px;top:126px" width="8" height="6" viewBox="0 0 8 6"><path d="M1 1.5l3 3 3-3" fill="none" stroke="#d8d8d8" stroke-width="1"/></svg>
<div class="a" style="left:77px;top:124.8px;width:2px;height:2px;background:#cfcfcf;border-radius:1px"></div>
<div class="a" style="left:77px;top:128.3px;width:2px;height:2px;background:#cfcfcf;border-radius:1px"></div>
<div class="a" style="left:77px;top:131.8px;width:2px;height:2px;background:#cfcfcf;border-radius:1px"></div>
<div class="a" style="left:84px;top:120.5px;width:48px;height:15.5px;background:#262626;border:1px solid #3f3f3f;border-radius:3px"></div>
<svg class="a" style="left:88px;top:124px" width="10" height="9" viewBox="0 0 10 9"><path d="M1 0.5l8 8M9 0.5l-8 8" stroke="#7a7a7a" stroke-width="0.9"/></svg>
<svg class="a" style="left:102px;top:124px" width="13" height="9" viewBox="0 0 13 9"><path d="M1 4.5l3.5 3.5L12 1" fill="none" stroke="#7a7a7a" stroke-width="0.9"/></svg>
<div class="t" style="left:119.5px;top:122px;font-family:'Liberation Serif',serif;font-style:italic;font-size:11px;color:#cfcfcf">fx</div>
<div class="a" style="left:135px;top:120.5px;width:859px;height:15.5px;background:#262626;border:1px solid #3f3f3f;border-radius:3px"></div>
<div class="t" style="left:142.4px;top:123.75px;font-size:9.5px;color:#dcdcdc;font-weight:400;transform:scaleX(0.8508);transform-origin:0 0;">67</div>
<svg class="a" style="left:983px;top:125px" width="9" height="7" viewBox="0 0 9 7"><path d="M1.5 2l3 3 3-3" fill="none" stroke="#d8d8d8" stroke-width="1"/></svg>
<div class="a" style="left:24px;top:157px;width:963px;height:371px;background:#ffffff"></div>
<div class="a" style="left:0;top:140px;width:987px;height:17px;background:#0b0b0b"></div>
<div class="a" style="left:24px;top:140px;width:493px;height:17px;background:#6b6b6b"></div>
<svg class="a" style="left:0;top:140px" width="24" height="17" viewBox="0 0 24 17"><path d="M9.5 16H23V3z" fill="#6b6b6b"/></svg>
<div class="t" style="left:24px;top:144px;width:94px;text-align:center;font-size:12px;color:#e6e6e6">A</div>
<div class="a" style="left:117px;top:141px;width:1px;height:15px;background:#8a8a8a"></div>
<div class="t" style="left:118px;top:144px;width:62px;text-align:center;font-size:12px;color:#e6e6e6">B</div>
<div class="a" style="left:179px;top:141px;width:1px;height:15px;background:#8a8a8a"></div>
<div class="t" style="left:180px;top:144px;width:64px;text-align:center;font-size:12px;color:#e6e6e6">C</div>
<div class="a" style="left:243px;top:141px;width:1px;height:15px;background:#8a8a8a"></div>
<div class="t" style="left:244px;top:144px;width:64px;text-align:center;font-size:12px;color:#e6e6e6">D</div>
<div class="a" style="left:307px;top:141px;width:1px;height:15px;background:#8a8a8a"></div>
<div class="t" style="left:308px;top:144px;width:64px;text-align:center;font-size:12px;color:#e6e6e6">E</div>
<div class="a" style="left:371px;top:141px;width:1px;height:15px;background:#8a8a8a"></div>
<div class="t" style="left:372px;top:144px;width:64px;text-align:center;font-size:12px;color:#e6e6e6">F</div>
<div class="a" style="left:435px;top:141px;width:1px;height:15px;background:#8a8a8a"></div>
<div class="t" style="left:436px;top:144px;width:81px;text-align:center;font-size:12px;color:#e6e6e6">G</div>
<div class="a" style="left:516px;top:141px;width:1px;height:15px;background:#8a8a8a"></div>
<div class="t" style="left:517px;top:144px;width:68px;text-align:center;font-size:12px;color:#dcdcdc">H</div>
<div class="a" style="left:584px;top:141px;width:1px;height:15px;background:#333333"></div>
<div class="t" style="left:585px;top:144px;width:44px;text-align:center;font-size:12px;color:#dcdcdc">I</div>
<div class="a" style="left:628px;top:141px;width:1px;height:15px;background:#333333"></div>
<div class="t" style="left:629px;top:144px;width:42px;text-align:center;font-size:12px;color:#dcdcdc">J</div>
<div class="a" style="left:670px;top:141px;width:1px;height:15px;background:#333333"></div>
<div class="t" style="left:671px;top:144px;width:34px;text-align:center;font-size:12px;color:#dcdcdc">K</div>
<div class="a" style="left:704px;top:141px;width:1px;height:15px;background:#333333"></div>
<div class="t" style="left:705px;top:144px;width:81px;text-align:center;font-size:12px;color:#dcdcdc">L</div>
<div class="a" style="left:785px;top:141px;width:1px;height:15px;background:#333333"></div>
<div class="a" style="left:852px;top:141px;width:1px;height:15px;background:#333333"></div>
<div class="a" style="left:887px;top:141px;width:1px;height:15px;background:#333333"></div>
<div class="a" style="left:967px;top:141px;width:1px;height:15px;background:#333333"></div>
<div class="a" style="left:0;top:157px;width:24px;height:18px;background:#0b0b0b"></div>
<div class="t" style="left:0;top:161.6px;width:24px;text-align:center;font-size:12.5px;color:#dcdcdc">1</div>
<div class="a" style="left:0;top:175px;width:24px;height:17px;background:#6b6b6b"></div>
<div class="t" style="left:0;top:179.6px;width:24px;text-align:center;font-size:12.5px;color:#f0f0f0">2</div>
<div class="a" style="left:0;top:192px;width:24px;height:18px;background:#6b6b6b"></div>
<div class="t" style="left:0;top:196.6px;width:24px;text-align:center;font-size:12.5px;color:#f0f0f0">3</div>
<div class="a" style="left:0;top:210px;width:24px;height:18px;background:#6b6b6b"></div>
<div class="t" style="left:0;top:214.6px;width:24px;text-align:center;font-size:12.5px;color:#f0f0f0">4</div>
<div class="a" style="left:0;top:228px;width:24px;height:18px;background:#6b6b6b"></div>
<div class="t" style="left:0;top:232.6px;width:24px;text-align:center;font-size:12.5px;color:#f0f0f0">5</div>
<div class="a" style="left:0;top:246px;width:24px;height:17px;background:#6b6b6b"></div>
<div class="t" style="left:0;top:250.6px;width:24px;text-align:center;font-size:12.5px;color:#f0f0f0">6</div>
<div class="a" style="left:0;top:263px;width:24px;height:18px;background:#6b6b6b"></div>
<div class="t" style="left:0;top:267.6px;width:24px;text-align:center;font-size:12.5px;color:#f0f0f0">7</div>
<div class="a" style="left:0;top:281px;width:24px;height:18px;background:#6b6b6b"></div>
<div class="t" style="left:0;top:285.6px;width:24px;text-align:center;font-size:12.5px;color:#f0f0f0">8</div>
<div class="a" style="left:0;top:299px;width:24px;height:18px;background:#6b6b6b"></div>
<div class="t" style="left:0;top:303.6px;width:24px;text-align:center;font-size:12.5px;color:#f0f0f0">9</div>
<div class="a" style="left:0;top:317px;width:24px;height:17px;background:#6b6b6b"></div>
<div class="t" style="left:0;top:321.6px;width:24px;text-align:center;font-size:12.5px;color:#f0f0f0">10</div>
<div class="a" style="left:0;top:334px;width:24px;height:18px;background:#6b6b6b"></div>
<div class="t" style="left:0;top:338.6px;width:24px;text-align:center;font-size:12.5px;color:#f0f0f0">11</div>
<div class="a" style="left:0;top:352px;width:24px;height:18px;background:#0b0b0b"></div>
<div class="t" style="left:0;top:356.6px;width:24px;text-align:center;font-size:12.5px;color:#dcdcdc">12</div>
<div class="a" style="left:0;top:370px;width:24px;height:17px;background:#0b0b0b"></div>
<div class="t" style="left:0;top:374.6px;width:24px;text-align:center;font-size:12.5px;color:#dcdcdc">13</div>
<div class="a" style="left:0;top:387px;width:24px;height:18px;background:#0b0b0b"></div>
<div class="t" style="left:0;top:391.6px;width:24px;text-align:center;font-size:12.5px;color:#dcdcdc">14</div>
<div class="a" style="left:0;top:405px;width:24px;height:18px;background:#0b0b0b"></div>
<div class="t" style="left:0;top:409.6px;width:24px;text-align:center;font-size:12.5px;color:#dcdcdc">15</div>
<div class="a" style="left:0;top:423px;width:24px;height:18px;background:#0b0b0b"></div>
<div class="t" style="left:0;top:427.6px;width:24px;text-align:center;font-size:12.5px;color:#dcdcdc">16</div>
<div class="a" style="left:0;top:441px;width:24px;height:17px;background:#0b0b0b"></div>
<div class="t" style="left:0;top:445.6px;width:24px;text-align:center;font-size:12.5px;color:#dcdcdc">17</div>
<div class="a" style="left:0;top:458px;width:24px;height:18px;background:#0b0b0b"></div>
<div class="t" style="left:0;top:462.6px;width:24px;text-align:center;font-size:12.5px;color:#dcdcdc">18</div>
<div class="a" style="left:0;top:476px;width:24px;height:18px;background:#0b0b0b"></div>
<div class="t" style="left:0;top:480.6px;width:24px;text-align:center;font-size:12.5px;color:#dcdcdc">19</div>
<div class="a" style="left:0;top:494px;width:24px;height:18px;background:#0b0b0b"></div>
<div class="t" style="left:0;top:498.6px;width:24px;text-align:center;font-size:12.5px;color:#dcdcdc">20</div>
<div class="a" style="left:0;top:512px;width:24px;height:17px;background:#0b0b0b"></div>
<div class="t" style="left:0;top:516.6px;width:24px;text-align:center;font-size:12.5px;color:#dcdcdc">21</div>
<div class="a" style="left:0;top:175px;width:24px;height:1px;background:#2a2a2a"></div>
<div class="a" style="left:0;top:192px;width:24px;height:1px;background:#858585"></div>
<div class="a" style="left:0;top:210px;width:24px;height:1px;background:#858585"></div>
<div class="a" style="left:0;top:228px;width:24px;height:1px;background:#858585"></div>
<div class="a" style="left:0;top:246px;width:24px;height:1px;background:#858585"></div>
<div class="a" style="left:0;top:263px;width:24px;height:1px;background:#858585"></div>
<div class="a" style="left:0;top:281px;width:24px;height:1px;background:#858585"></div>
<div class="a" style="left:0;top:299px;width:24px;height:1px;background:#858585"></div>
<div class="a" style="left:0;top:317px;width:24px;height:1px;background:#858585"></div>
<div class="a" style="left:0;top:334px;width:24px;height:1px;background:#858585"></div>
<div class="a" style="left:0;top:352px;width:24px;height:1px;background:#2a2a2a"></div>
<div class="a" style="left:0;top:370px;width:24px;height:1px;background:#2a2a2a"></div>
<div class="a" style="left:0;top:387px;width:24px;height:1px;background:#2a2a2a"></div>
<div class="a" style="left:0;top:405px;width:24px;height:1px;background:#2a2a2a"></div>
<div class="a" style="left:0;top:423px;width:24px;height:1px;background:#2a2a2a"></div>
<div class="a" style="left:0;top:441px;width:24px;height:1px;background:#2a2a2a"></div>
<div class="a" style="left:0;top:458px;width:24px;height:1px;background:#2a2a2a"></div>
<div class="a" style="left:0;top:476px;width:24px;height:1px;background:#2a2a2a"></div>
<div class="a" style="left:0;top:494px;width:24px;height:1px;background:#2a2a2a"></div>
<div class="a" style="left:0;top:512px;width:24px;height:1px;background:#2a2a2a"></div>
<div class="a" style="left:24px;top:175px;width:963px;height:1px;background:#ebebeb"></div>
<div class="a" style="left:24px;top:192px;width:963px;height:1px;background:#ebebeb"></div>
<div class="a" style="left:24px;top:210px;width:963px;height:1px;background:#ebebeb"></div>
<div class="a" style="left:24px;top:228px;width:963px;height:1px;background:#ebebeb"></div>
<div class="a" style="left:24px;top:246px;width:963px;height:1px;background:#ebebeb"></div>
<div class="a" style="left:24px;top:263px;width:963px;height:1px;background:#ebebeb"></div>
<div class="a" style="left:24px;top:281px;width:963px;height:1px;background:#ebebeb"></div>
<div class="a" style="left:24px;top:299px;width:963px;height:1px;background:#ebebeb"></div>
<div class="a" style="left:24px;top:317px;width:963px;height:1px;background:#ebebeb"></div>
<div class="a" style="left:24px;top:334px;width:963px;height:1px;background:#ebebeb"></div>
<div class="a" style="left:24px;top:352px;width:963px;height:1px;background:#ebebeb"></div>
<div class="a" style="left:24px;top:370px;width:963px;height:1px;background:#ebebeb"></div>
<div class="a" style="left:24px;top:387px;width:963px;height:1px;background:#ebebeb"></div>
<div class="a" style="left:24px;top:405px;width:963px;height:1px;background:#ebebeb"></div>
<div class="a" style="left:24px;top:423px;width:963px;height:1px;background:#ebebeb"></div>
<div class="a" style="left:24px;top:441px;width:963px;height:1px;background:#ebebeb"></div>
<div class="a" style="left:24px;top:458px;width:963px;height:1px;background:#ebebeb"></div>
<div class="a" style="left:24px;top:476px;width:963px;height:1px;background:#ebebeb"></div>
<div class="a" style="left:24px;top:494px;width:963px;height:1px;background:#ebebeb"></div>
<div class="a" style="left:24px;top:512px;width:963px;height:1px;background:#ebebeb"></div>
<div class="a" style="left:24px;top:529px;width:963px;height:1px;background:#ebebeb"></div>
<div class="a" style="left:117px;top:157px;width:1px;height:371px;background:#ebebeb"></div>
<div class="a" style="left:179px;top:157px;width:1px;height:371px;background:#ebebeb"></div>
<div class="a" style="left:243px;top:157px;width:1px;height:371px;background:#ebebeb"></div>
<div class="a" style="left:307px;top:157px;width:1px;height:371px;background:#ebebeb"></div>
<div class="a" style="left:371px;top:157px;width:1px;height:371px;background:#ebebeb"></div>
<div class="a" style="left:435px;top:157px;width:1px;height:371px;background:#ebebeb"></div>
<div class="a" style="left:516px;top:157px;width:1px;height:371px;background:#ebebeb"></div>
<div class="a" style="left:584px;top:157px;width:1px;height:371px;background:#ebebeb"></div>
<div class="a" style="left:628px;top:157px;width:1px;height:371px;background:#ebebeb"></div>
<div class="a" style="left:670px;top:157px;width:1px;height:371px;background:#ebebeb"></div>
<div class="a" style="left:704px;top:157px;width:1px;height:371px;background:#ebebeb"></div>
<div class="a" style="left:785px;top:157px;width:1px;height:371px;background:#ebebeb"></div>
<div class="a" style="left:852px;top:157px;width:1px;height:371px;background:#ebebeb"></div>
<div class="a" style="left:887px;top:157px;width:1px;height:371px;background:#ebebeb"></div>
<div class="a" style="left:967px;top:157px;width:1px;height:371px;background:#ebebeb"></div>
<div class="a" style="left:24px;top:157px;width:493px;height:18px;background:#4472c4"></div>
<div class="t" style="left:27.0px;top:162.3px;font-size:12px;font-weight:700;color:#ffffff;letter-spacing:-0.1px">Name</div>
<div class="a" style="left:107px;top:164px;width:11px;height:11px;background:#f2f2f2"></div>
<svg class="a" style="left:107px;top:164px" width="11" height="11" viewBox="0 0 11 11"><path d="M3 4h5L5.5 6.5z" fill="#4a4a4a"/></svg>
<div class="t" style="left:120.2px;top:162.3px;font-size:12px;font-weight:700;color:#ffffff;letter-spacing:-0.1px">Roll</div>
<div class="a" style="left:169px;top:164px;width:11px;height:11px;background:#f2f2f2"></div>
<svg class="a" style="left:169px;top:164px" width="11" height="11" viewBox="0 0 11 11"><path d="M3 4h5L5.5 6.5z" fill="#4a4a4a"/></svg>
<div class="t" style="left:182.2px;top:162.3px;font-size:12px;font-weight:700;color:#ffffff;letter-spacing:-0.1px">Hindi</div>
<div class="a" style="left:233px;top:164px;width:11px;height:11px;background:#f2f2f2"></div>
<svg class="a" style="left:233px;top:164px" width="11" height="11" viewBox="0 0 11 11"><path d="M3 4h5L5.5 6.5z" fill="#4a4a4a"/></svg>
<div class="t" style="left:246.2px;top:162.3px;font-size:12px;font-weight:700;color:#ffffff;letter-spacing:-0.1px">English</div>
<div class="a" style="left:297px;top:164px;width:11px;height:11px;background:#f2f2f2"></div>
<svg class="a" style="left:297px;top:164px" width="11" height="11" viewBox="0 0 11 11"><path d="M3 4h5L5.5 6.5z" fill="#4a4a4a"/></svg>
<div class="t" style="left:310.2px;top:162.3px;font-size:12px;font-weight:700;color:#ffffff;letter-spacing:-0.1px">Maths</div>
<div class="a" style="left:361px;top:164px;width:11px;height:11px;background:#f2f2f2"></div>
<svg class="a" style="left:361px;top:164px" width="11" height="11" viewBox="0 0 11 11"><path d="M3 4h5L5.5 6.5z" fill="#4a4a4a"/></svg>
<div class="t" style="left:374.2px;top:162.3px;font-size:12px;font-weight:700;color:#ffffff;letter-spacing:-0.1px">Total</div>
<div class="a" style="left:425px;top:164px;width:11px;height:11px;background:#f2f2f2"></div>
<svg class="a" style="left:425px;top:164px" width="11" height="11" viewBox="0 0 11 11"><path d="M3 4h5L5.5 6.5z" fill="#4a4a4a"/></svg>
<div class="t" style="left:438.2px;top:162.3px;font-size:12px;font-weight:700;color:#ffffff;letter-spacing:-0.1px">Average</div>
<div class="a" style="left:506px;top:164px;width:11px;height:11px;background:#f2f2f2"></div>
<svg class="a" style="left:506px;top:164px" width="11" height="11" viewBox="0 0 11 11"><path d="M3 4h5L5.5 6.5z" fill="#4a4a4a"/></svg>
<div class="a" style="left:24px;top:175px;width:493px;height:17px;background:#adb4c4"></div>
<div class="t" style="left:26.6px;top:179.6px;font-size:12px;color:#111;-webkit-text-stroke:0.3px #111">Sonali Dubey</div>
<div class="t" style="left:118px;top:179.6px;width:59px;text-align:right;font-size:12px;color:#111;-webkit-text-stroke:0.3px #111">58</div>
<div class="t" style="left:180px;top:179.6px;width:61px;text-align:right;font-size:12px;color:#111;-webkit-text-stroke:0.3px #111">97</div>
<div class="t" style="left:244px;top:179.6px;width:61px;text-align:right;font-size:12px;color:#111;-webkit-text-stroke:0.3px #111">92</div>
<div class="t" style="left:308px;top:179.6px;width:61px;text-align:right;font-size:12px;color:#111;-webkit-text-stroke:0.3px #111">56</div>
<div class="t" style="left:372px;top:179.6px;width:61px;text-align:right;font-size:12px;color:#111;-webkit-text-stroke:0.3px #111">245</div>
<div class="t" style="left:436px;top:179.6px;width:78px;text-align:right;font-size:12px;color:#111;-webkit-text-stroke:0.3px #111">81.66666667</div>
<svg class="a" style="left:372px;top:176px" width="6" height="6" viewBox="0 0 6 6"><path d="M0 0h5L0 5z" fill="#1e8a3c"/></svg>
<div class="a" style="left:24px;top:192px;width:493px;height:18px;background:#c9c9c9"></div>
<div class="t" style="left:26.6px;top:196.6px;font-size:12px;color:#111;-webkit-text-stroke:0.3px #111">Lokesh Singh</div>
<div class="t" style="left:118px;top:196.6px;width:59px;text-align:right;font-size:12px;color:#111;-webkit-text-stroke:0.3px #111">25</div>
<div class="t" style="left:180px;top:196.6px;width:61px;text-align:right;font-size:12px;color:#111;-webkit-text-stroke:0.3px #111">43</div>
<div class="t" style="left:244px;top:196.6px;width:61px;text-align:right;font-size:12px;color:#111;-webkit-text-stroke:0.3px #111">89</div>
<div class="t" style="left:308px;top:196.6px;width:61px;text-align:right;font-size:12px;color:#111;-webkit-text-stroke:0.3px #111">89</div>
<div class="t" style="left:372px;top:196.6px;width:61px;text-align:right;font-size:12px;color:#111;-webkit-text-stroke:0.3px #111">221</div>
<div class="t" style="left:436px;top:196.6px;width:78px;text-align:right;font-size:12px;color:#111;-webkit-text-stroke:0.3px #111">73.66666667</div>
<svg class="a" style="left:372px;top:193px" width="6" height="6" viewBox="0 0 6 6"><path d="M0 0h5L0 5z" fill="#1e8a3c"/></svg>
<div class="a" style="left:24px;top:210px;width:493px;height:18px;background:#adb4c4"></div>
<div class="t" style="left:26.6px;top:214.6px;font-size:12px;color:#111;-webkit-text-stroke:0.3px #111">Diwakar Singh</div>
<div class="t" style="left:118px;top:214.6px;width:59px;text-align:right;font-size:12px;color:#111;-webkit-text-stroke:0.3px #111">16</div>
<div class="t" style="left:180px;top:214.6px;width:61px;text-align:right;font-size:12px;color:#111;-webkit-text-stroke:0.3px #111">45</div>
<div class="t" style="left:244px;top:214.6px;width:61px;text-align:right;font-size:12px;color:#111;-webkit-text-stroke:0.3px #111">45</div>
<div class="t" style="left:308px;top:214.6px;width:61px;text-align:right;font-size:12px;color:#111;-webkit-text-stroke:0.3px #111">90</div>
<div class="t" style="left:372px;top:214.6px;width:61px;text-align:right;font-size:12px;color:#111;-webkit-text-stroke:0.3px #111">180</div>
<div class="t" style="left:436px;top:214.6px;width:78px;text-align:right;font-size:12px;color:#111;-webkit-text-stroke:0.3px #111">60</div>
<svg class="a" style="left:372px;top:211px" width="6" height="6" viewBox="0 0 6 6"><path d="M0 0h5L0 5z" fill="#1e8a3c"/></svg>
<div class="a" style="left:24px;top:228px;width:493px;height:18px;background:#c9c9c9"></div>
<div class="a" style="left:308px;top:229px;width:63px;height:17px;background:#ffffff"></div>
<div class="t" style="left:26.6px;top:232.6px;font-size:12px;color:#111;-webkit-text-stroke:0.3px #111">Ritik Srivastav</div>
<div class="t" style="left:118px;top:232.6px;width:59px;text-align:right;font-size:12px;color:#111;-webkit-text-stroke:0.3px #111">41</div>
<div class="t" style="left:180px;top:232.6px;width:61px;text-align:right;font-size:12px;color:#111;-webkit-text-stroke:0.3px #111">56</div>
<div class="t" style="left:244px;top:232.6px;width:61px;text-align:right;font-size:12px;color:#111;-webkit-text-stroke:0.3px #111">65</div>
<div class="t" style="left:308px;top:232.6px;width:61px;text-align:right;font-size:12px;color:#111;-webkit-text-stroke:0.3px #111">67</div>
<div class="t" style="left:372px;top:232.6px;width:61px;text-align:right;font-size:12px;color:#111;-webkit-text-stroke:0.3px #111">188</div>
<div class="t" style="left:436px;top:232.6px;width:78px;text-align:right;font-size:12px;color:#111;-webkit-text-stroke:0.3px #111">62.66666667</div>
<svg class="a" style="left:372px;top:229px" width="6" height="6" viewBox="0 0 6 6"><path d="M0 0h5L0 5z" fill="#1e8a3c"/></svg>
<div class="a" style="left:24px;top:246px;width:493px;height:17px;background:#adb4c4"></div>
<div class="t" style="left:26.6px;top:250.6px;font-size:12px;color:#111;-webkit-text-stroke:0.3px #111">Aniket Shivhare</div>
<div class="t" style="left:118px;top:250.6px;width:59px;text-align:right;font-size:12px;color:#111;-webkit-text-stroke:0.3px #111">6</div>
<div class="t" style="left:180px;top:250.6px;width:61px;text-align:right;font-size:12px;color:#111;-webkit-text-stroke:0.3px #111">67</div>
<div class="t" style="left:244px;top:250.6px;width:61px;text-align:right;font-size:12px;color:#111;-webkit-text-stroke:0.3px #111">67</div>
<div class="t" style="left:308px;top:250.6px;width:61px;text-align:right;font-size:12px;color:#111;-webkit-text-stroke:0.3px #111">78</div>
<div class="t" style="left:372px;top:250.6px;width:61px;text-align:right;font-size:12px;color:#111;-webkit-text-stroke:0.3px #111">212</div>
<div class="t" style="left:436px;top:250.6px;width:78px;text-align:right;font-size:12px;color:#111;-webkit-text-stroke:0.3px #111">70.66666667</div>
<svg class="a" style="left:372px;top:247px" width="6" height="6" viewBox="0 0 6 6"><path d="M0 0h5L0 5z" fill="#1e8a3c"/></svg>
<div class="a" style="left:24px;top:263px;width:493px;height:18px;background:#c9c9c9"></div>
<div class="t" style="left:26.6px;top:267.6px;font-size:12px;color:#111;-webkit-text-stroke:0.3px #111">Akshay Pathak</div>
<div class="t" style="left:118px;top:267.6px;width:59px;text-align:right;font-size:12px;color:#111;-webkit-text-stroke:0.3px #111">34</div>
<div class="t" style="left:180px;top:267.6px;width:61px;text-align:right;font-size:12px;color:#111;-webkit-text-stroke:0.3px #111">45</div>
<div class="t" style="left:244px;top:267.6px;width:61px;text-align:right;font-size:12px;color:#111;-webkit-text-stroke:0.3px #111">98</div>
<div class="t" style="left:308px;top:267.6px;width:61px;text-align:right;font-size:12px;color:#111;-webkit-text-stroke:0.3px #111">79</div>
<div class="t" style="left:372px;top:267.6px;width:61px;text-align:right;font-size:12px;color:#111;-webkit-text-stroke:0.3px #111">222</div>
<div class="t" style="left:436px;top:267.6px;width:78px;text-align:right;font-size:12px;color:#111;-webkit-text-stroke:0.3px #111">74</div>
<svg class="a" style="left:372px;top:264px" width="6" height="6" viewBox="0 0 6 6"><path d="M0 0h5L0 5z" fill="#1e8a3c"/></svg>
<div class="a" style="left:24px;top:281px;width:493px;height:18px;background:#adb4c4"></div>
<div class="t" style="left:26.6px;top:285.6px;font-size:12px;color:#111;-webkit-text-stroke:0.3px #111">Neelsesh</div>
<div class="t" style="left:118px;top:285.6px;width:59px;text-align:right;font-size:12px;color:#111;-webkit-text-stroke:0.3px #111">43</div>
<div class="t" style="left:180px;top:285.6px;width:61px;text-align:right;font-size:12px;color:#111;-webkit-text-stroke:0.3px #111">93</div>
<div class="t" style="left:244px;top:285.6px;width:61px;text-align:right;font-size:12px;color:#111;-webkit-text-stroke:0.3px #111">67</div>
<div class="t" style="left:308px;top:285.6px;width:61px;text-align:right;font-size:12px;color:#111;-webkit-text-stroke:0.3px #111">99</div>
<div class="t" style="left:372px;top:285.6px;width:61px;text-align:right;font-size:12px;color:#111;-webkit-text-stroke:0.3px #111">259</div>
<div class="t" style="left:436px;top:285.6px;width:78px;text-align:right;font-size:12px;color:#111;-webkit-text-stroke:0.3px #111">86.33333333</div>
<svg class="a" style="left:372px;top:282px" width="6" height="6" viewBox="0 0 6 6"><path d="M0 0h5L0 5z" fill="#1e8a3c"/></svg>
<div class="a" style="left:24px;top:299px;width:493px;height:18px;background:#c9c9c9"></div>
<div class="t" style="left:26.6px;top:303.6px;font-size:12px;color:#111;-webkit-text-stroke:0.3px #111">Akash Singh</div>
<div class="t" style="left:118px;top:303.6px;width:59px;text-align:right;font-size:12px;color:#111;-webkit-text-stroke:0.3px #111">90</div>
<div class="t" style="left:180px;top:303.6px;width:61px;text-align:right;font-size:12px;color:#111;-webkit-text-stroke:0.3px #111">78</div>
<div class="t" style="left:244px;top:303.6px;width:61px;text-align:right;font-size:12px;color:#111;-webkit-text-stroke:0.3px #111">98</div>
<div class="t" style="left:308px;top:303.6px;width:61px;text-align:right;font-size:12px;color:#111;-webkit-text-stroke:0.3px #111">89</div>
<div class="t" style="left:372px;top:303.6px;width:61px;text-align:right;font-size:12px;color:#111;-webkit-text-stroke:0.3px #111">265</div>
<div class="t" style="left:436px;top:303.6px;width:78px;text-align:right;font-size:12px;color:#111;-webkit-text-stroke:0.3px #111">88.33333333</div>
<svg class="a" style="left:372px;top:300px" width="6" height="6" viewBox="0 0 6 6"><path d="M0 0h5L0 5z" fill="#1e8a3c"/></svg>
<div class="a" style="left:24px;top:317px;width:493px;height:17px;background:#adb4c4"></div>
<div class="t" style="left:26.6px;top:321.6px;font-size:12px;color:#111;-webkit-text-stroke:0.3px #111">Rohit Gupta</div>
<div class="t" style="left:118px;top:321.6px;width:59px;text-align:right;font-size:12px;color:#111;-webkit-text-stroke:0.3px #111">80</div>
<div class="t" style="left:180px;top:321.6px;width:61px;text-align:right;font-size:12px;color:#111;-webkit-text-stroke:0.3px #111">68</div>
<div class="t" style="left:244px;top:321.6px;width:61px;text-align:right;font-size:12px;color:#111;-webkit-text-stroke:0.3px #111">54</div>
<div class="t" style="left:308px;top:321.6px;width:61px;text-align:right;font-size:12px;color:#111;-webkit-text-stroke:0.3px #111">78</div>
<div class="t" style="left:372px;top:321.6px;width:61px;text-align:right;font-size:12px;color:#111;-webkit-text-stroke:0.3px #111">200</div>
<div class="t" style="left:436px;top:321.6px;width:78px;text-align:right;font-size:12px;color:#111;-webkit-text-stroke:0.3px #111">66.66666667</div>
<svg class="a" style="left:372px;top:318px" width="6" height="6" viewBox="0 0 6 6"><path d="M0 0h5L0 5z" fill="#1e8a3c"/></svg>
<div class="a" style="left:24px;top:334px;width:493px;height:18px;background:#c9c9c9"></div>
<div class="t" style="left:26.6px;top:338.6px;font-size:12px;color:#111;-webkit-text-stroke:0.3px #111">Dheeraj</div>
<div class="t" style="left:118px;top:338.6px;width:59px;text-align:right;font-size:12px;color:#111;-webkit-text-stroke:0.3px #111">70</div>
<div class="t" style="left:180px;top:338.6px;width:61px;text-align:right;font-size:12px;color:#111;-webkit-text-stroke:0.3px #111">78</div>
<div class="t" style="left:244px;top:338.6px;width:61px;text-align:right;font-size:12px;color:#111;-webkit-text-stroke:0.3px #111">43</div>
<div class="t" style="left:308px;top:338.6px;width:61px;text-align:right;font-size:12px;color:#111;-webkit-text-stroke:0.3px #111">89</div>
<div class="t" style="left:372px;top:338.6px;width:61px;text-align:right;font-size:12px;color:#111;-webkit-text-stroke:0.3px #111">210</div>
<div class="t" style="left:436px;top:338.6px;width:78px;text-align:right;font-size:12px;color:#111;-webkit-text-stroke:0.3px #111">70</div>
<svg class="a" style="left:372px;top:335px" width="6" height="6" viewBox="0 0 6 6"><path d="M0 0h5L0 5z" fill="#1e8a3c"/></svg>
<div class="a" style="left:24px;top:192px;width:493px;height:1px;background:#98a2b6"></div>
<div class="a" style="left:24px;top:210px;width:493px;height:1px;background:#98a2b6"></div>
<div class="a" style="left:24px;top:228px;width:493px;height:1px;background:#98a2b6"></div>
<div class="a" style="left:24px;top:246px;width:493px;height:1px;background:#98a2b6"></div>
<div class="a" style="left:24px;top:263px;width:493px;height:1px;background:#98a2b6"></div>
<div class="a" style="left:24px;top:281px;width:493px;height:1px;background:#98a2b6"></div>
<div class="a" style="left:24px;top:299px;width:493px;height:1px;background:#98a2b6"></div>
<div class="a" style="left:24px;top:317px;width:493px;height:1px;background:#98a2b6"></div>
<div class="a" style="left:24px;top:334px;width:493px;height:1px;background:#98a2b6"></div>
<div class="a" style="left:24px;top:157px;width:493px;height:1px;background:#2a8a55"></div>
<div class="a" style="left:24px;top:175px;width:493px;height:1px;background:#2a8a55"></div>
<div class="a" style="left:24px;top:175px;width:1px;height:177px;background:#2a8a55"></div>
<div class="a" style="left:516px;top:175px;width:1px;height:177px;background:#2a8a55"></div>
<div class="a" style="left:24px;top:352px;width:493px;height:1px;background:#2a8a55"></div>
<div class="a" style="left:515px;top:351px;width:3px;height:3px;background:#2a8a55"></div>
<div class="a" style="left:987px;top:140px;width:13px;height:388px;background:#0b0b0b"></div>
<div class="a" style="left:988.5px;top:141px;width:10.5px;height:386px;background:#161616;border-radius:5px"></div>
<svg class="a" style="left:989px;top:143px" width="8" height="6" viewBox="0 0 8 6"><path d="M0.5 5.5L4 1l3.5 4.5z" fill="#cfcfcf"/></svg>
<div class="a" style="left:990.5px;top:151px;width:6px;height:162px;background:#a0a0a0;border-radius:3px"></div>
<svg class="a" style="left:989.5px;top:521px" width="8" height="6" viewBox="0 0 8 6"><path d="M0.5 0.5L4 5l3.5-4.5z" fill="#bdbdbd"/></svg>
<div class="a" style="left:0;top:528px;width:1000px;height:20px;background:#0b0b0b"></div>
<svg class="a" style="left:15px;top:533px" width="8" height="9" viewBox="0 0 8 9"><path d="M5.5 1L2 4.5 5.5 8" fill="none" stroke="#8a8a8a" stroke-width="1"/></svg>
<svg class="a" style="left:36px;top:533px" width="8" height="9" viewBox="0 0 8 9"><path d="M2.5 1L6 4.5 2.5 8" fill="none" stroke="#8a8a8a" stroke-width="1"/></svg>
<div class="a" style="left:66px;top:528px;width:52px;height:6px;background:#ffffff"></div>
<div class="a" style="left:50px;top:528px;width:23.5px;height:20px;background:#0b0b0b;border-top-right-radius:5px"></div>
<div class="a" style="left:111.5px;top:528px;width:30px;height:20px;background:#0b0b0b;border-top-left-radius:5px"></div>
<div class="a" style="left:73.5px;top:528px;width:38px;height:17.5px;background:#ffffff;border-radius:0 0 4px 4px"></div>
<div class="t" style="left:78.5px;top:532.3px;font-size:9px;font-weight:700;color:#3c3c3c;letter-spacing:-0.2px">Sheet1</div>
<div class="a" style="left:79px;top:543.3px;width:27px;height:1px;background:#1f7a45"></div>
<div class="a" style="left:114px;top:532px;width:1px;height:10px;background:#444444"></div>
<svg class="a" style="left:140px;top:533px" width="9" height="9" viewBox="0 0 9 9"><path d="M4.5 0.5v8M0.5 4.5h8" stroke="#e0e0e0" stroke-width="1"/></svg>
<div class="a" style="left:601px;top:534px;width:1.6px;height:1.6px;background:#cfcfcf"></div>
<div class="a" style="left:601px;top:536.5px;width:1.6px;height:1.6px;background:#cfcfcf"></div>
<div class="a" style="left:601px;top:539px;width:1.6px;height:1.6px;background:#cfcfcf"></div>
<div class="a" style="left:613.5px;top:532px;width:374px;height:11px;background:#131313;border:1px solid #1c1c1c;border-radius:6px"></div>
<svg class="a" style="left:614px;top:534px" width="7" height="8" viewBox="0 0 7 8"><path d="M5.5 0.5L1 4l4.5 3.5z" fill="#cfcfcf"/></svg>
<div class="a" style="left:622px;top:534.5px;width:333px;height:6px;background:#a0a0a0;border-radius:3px"></div>
<svg class="a" style="left:980px;top:534px" width="7" height="8" viewBox="0 0 7 8"><path d="M1.5 0.5L6 4l-4.5 3.5z" fill="#cfcfcf"/></svg>
<div class="a" style="left:0;top:548px;width:1000px;height:13px;background:#151515"></div>
<div class="a" style="left:0;top:561px;width:1000px;height:1px;background:#0b0b0b"></div>
<div class="a" style="left:0;top:562px;width:1000px;height:1px;background:#8e8e8e"></div>
<div class="t" style="left:7px;top:551.80px;font-size:8px;color:#d0d0d0;font-weight:400;transform:scaleX(0.8216);transform-origin:0 0;">Ready</div>
<svg class="a" style="left:40px;top:550px" width="9" height="11" viewBox="0 0 9 11"><path d="M0.5 0.5h5.5l2.5 2.5v7.5h-8z" fill="none" stroke="#cfcfcf" stroke-width="0.9"/><rect x="2" y="5" width="5" height="4" fill="#cfcfcf"/></svg>
<div class="t" style="left:49.8px;top:551.80px;font-size:8px;color:#d0d0d0;font-weight:400;transform:scaleX(0.8469);transform-origin:0 0;">General\All Employees (unrestricted)</div>
<svg class="a" style="left:172px;top:550px" width="11" height="11" viewBox="0 0 11 11"><circle cx="5" cy="1.8" r="1.2" fill="#cfcfcf"/><path d="M1 3.5h8M5 3.5v3l-2 4M5 6.5l2 4" fill="none" stroke="#cfcfcf" stroke-width="0.9"/></svg>
<div class="t" style="left:183.5px;top:551.80px;font-size:8px;color:#d0d0d0;font-weight:400;transform:scaleX(0.8743);transform-origin:0 0;">Accessibility: Good to go</div>
<div class="t" style="left:668.2px;top:551.80px;font-size:8px;color:#d0d0d0;font-weight:400;transform:scaleX(0.8388);transform-origin:0 0;">Average: 93.35</div>
<div class="t" style="left:723.6px;top:551.80px;font-size:8px;color:#d0d0d0;font-weight:400;transform:scaleX(0.8241);transform-origin:0 0;">Count: 70</div>
<div class="t" style="left:762.7px;top:551.80px;font-size:8px;color:#d0d0d0;font-weight:400;transform:scaleX(0.7932);transform-origin:0 0;">Sum: 5601</div>
<div class="a" style="left:807px;top:548px;width:25px;height:13px;background:#2a2a2a"></div>
<svg class="a" style="left:814px;top:551px" width="10" height="10" viewBox="0 0 10 10"><rect x="0.5" y="0.5" width="9" height="9" fill="none" stroke="#e0e0e0" stroke-width="0.9"/><path d="M0.5 3.5h9M0.5 6.5h9M3.5 0.5v9M6.5 0.5v9" stroke="#e0e0e0" stroke-width="0.8"/></svg>
<svg class="a" style="left:840px;top:551px" width="10" height="10" viewBox="0 0 10 10"><rect x="0.5" y="0.5" width="9" height="9" fill="none" stroke="#d0d0d0" stroke-width="0.9"/><path d="M2.5 0.5v9M7.5 0.5v9" stroke="#d0d0d0" stroke-width="0.8"/><rect x="3.5" y="2" width="3" height="6" fill="none" stroke="#9a9a9a" stroke-width="0.7"/></svg>
<svg class="a" style="left:866.5px;top:551px" width="10" height="10" viewBox="0 0 10 10"><path d="M0.5 0.5h9v9h-9z" fill="none" stroke="#d0d0d0" stroke-width="0.9"/><path d="M3.5 0.5v5h6" fill="none" stroke="#d0d0d0" stroke-width="0.9"/></svg>
<div class="a" style="left:888.5px;top:555.5px;width:5px;height:1px;background:#cfcfcf"></div>
<div class="a" style="left:897px;top:555.5px;width:63px;height:1px;background:#8a8a8a"></div>
<div class="a" style="left:931.5px;top:551.5px;width:2.5px;height:8px;background:#e0e0e0"></div>
<svg class="a" style="left:964px;top:552px" width="7" height="7" viewBox="0 0 7 7"><path d="M3.5 0.5v6M0.5 3.5h6" stroke="#cfcfcf" stroke-width="0.9"/></svg>
<div class="t" style="left:978px;top:551.80px;font-size:8px;color:#d0d0d0;font-weight:400;transform:scaleX(0.8305);transform-origin:0 0;">141%</div>
<div class="a" style="left:799px;top:83.5px;width:165px;height:137px;background:#2b2b2b;border:1px solid #555555;border-radius:4px;box-shadow:0 2px 6px rgba(0,0,0,0.35)"></div>
<div class="t" style="left:823px;top:89.90px;font-size:9px;color:#ececec;font-weight:400;transform:scaleX(0.8671);transform-origin:0 0;">Apply and <u>C</u>lear Formatting</div>
<div class="t" style="left:823px;top:108.60px;font-size:9px;color:#ececec;font-weight:400;transform:scaleX(0.8815);transform-origin:0 0;">Apply (and <u>M</u>aintain Formatting)</div>
<div class="a" style="left:820px;top:122px;width:144px;height:1px;background:#454545"></div>
<div class="t" style="left:823px;top:128.70px;font-size:9px;color:#6a6a6a;font-weight:400;transform:scaleX(0.8600);transform-origin:0 0;">Modif<u>y</u>...</div>
<div class="t" style="left:823px;top:147.60px;font-size:9px;color:#ececec;font-weight:400;transform:scaleX(0.8600);transform-origin:0 0;">Du<u>p</u>licate...</div>
<div class="t" style="left:823px;top:166.60px;font-size:9px;color:#6a6a6a;font-weight:400;transform:scaleX(0.8600);transform-origin:0 0;">Delete</div>
<div class="a" style="left:800px;top:180.5px;width:161px;height:20.5px;background:#3a3a3a"></div>
<div class="a" style="left:796px;top:172.7px;width:169px;height:35.3px;border:4.2px solid #f8d24a"></div>
<div class="t" style="left:823px;top:186.80px;font-size:9px;color:#ececec;font-weight:400;transform:scaleX(0.8570);transform-origin:0 0;">Set As <u>D</u>efault</div>
<div class="t" style="left:823px;top:207.40px;font-size:9px;color:#ececec;font-weight:400;transform:scaleX(0.8596);transform-origin:0 0;"><u>A</u>dd Gallery to Quick Access Toolbar</div></body></html>
